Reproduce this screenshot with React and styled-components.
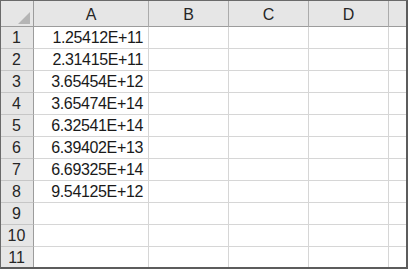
import React from "react";
import styled, { createGlobalStyle } from "styled-components";

const GlobalStyle = createGlobalStyle`
  html, body {
    margin: 0;
    padding: 0;
    background: #ffffff;
  }
`;

const Frame = styled.div`
  width: 408px;
  height: 269px;
  box-sizing: border-box;
  border-top: 1px solid #6a6a6a;
  border-left: 1px solid #6a6a6a;
  border-right: 2px solid #5c5c5c;
  border-bottom: 2px solid #5c5c5c;
  overflow: hidden;
  background: #ffffff;
  font-family: "Liberation Sans", Arial, sans-serif;
  font-size: 16px;
  color: #1a1a1a;
`;

const Sheet = styled.div`
  display: grid;
  grid-template-columns: 33px 115px 80px 80px 80px 40px;
  grid-auto-rows: 22px;
  grid-template-rows: 26px;
`;

const Cell = styled.div`
  box-sizing: border-box;
  border-right: 1px solid #d6d6d6;
  border-bottom: 1px solid #d6d6d6;
  display: flex;
  align-items: center;
  justify-content: flex-end;
  padding: 1px 5px 0 0;
  letter-spacing: -0.35px;
  white-space: nowrap;
`;

const ColHead = styled.div`
  box-sizing: border-box;
  background: #e6e6e6;
  border-right: 1px solid #ababab;
  border-bottom: 1px solid #9c9c9c;
  display: flex;
  align-items: center;
  justify-content: center;
  padding-top: 3px;
  color: #262626;
`;

const RowHead = styled.div`
  box-sizing: border-box;
  background: #e6e6e6;
  border-right: 1px solid #9c9c9c;
  border-bottom: 1px solid #c6c6c6;
  display: flex;
  align-items: center;
  justify-content: center;
  padding: 1px 1px 0 0;
  color: #262626;
`;

const Corner = styled(ColHead)`
  border-right-color: #9c9c9c;
  align-items: flex-end;
  justify-content: flex-end;
  padding: 0 3px 2px 0;
`;

const values = [
  "1.25412E+11",
  "2.31415E+11",
  "3.65454E+12",
  "3.65474E+14",
  "6.32541E+14",
  "6.39402E+13",
  "6.69325E+14",
  "9.54125E+12",
];

const columns = ["A", "B", "C", "D", ""];

export default function App() {
  const rows = Array.from({ length: 11 }, (_, i) => i + 1);
  return (
    <>
      <GlobalStyle />
      <Frame>
        <Sheet>
          <Corner>
            <svg width="12" height="12" viewBox="0 0 12 12">
              <polygon points="12,0 12,12 0,12" fill="#b5b5b5" />
            </svg>
          </Corner>
          {columns.map((c, i) => (
            <ColHead key={i}>{c}</ColHead>
          ))}
          {rows.map((r) => (
            <React.Fragment key={r}>
              <RowHead>{r}</RowHead>
              <Cell>{values[r - 1] || ""}</Cell>
              <Cell />
              <Cell />
              <Cell />
              <Cell />
            </React.Fragment>
          ))}
        </Sheet>
      </Frame>
    </>
  );
}
